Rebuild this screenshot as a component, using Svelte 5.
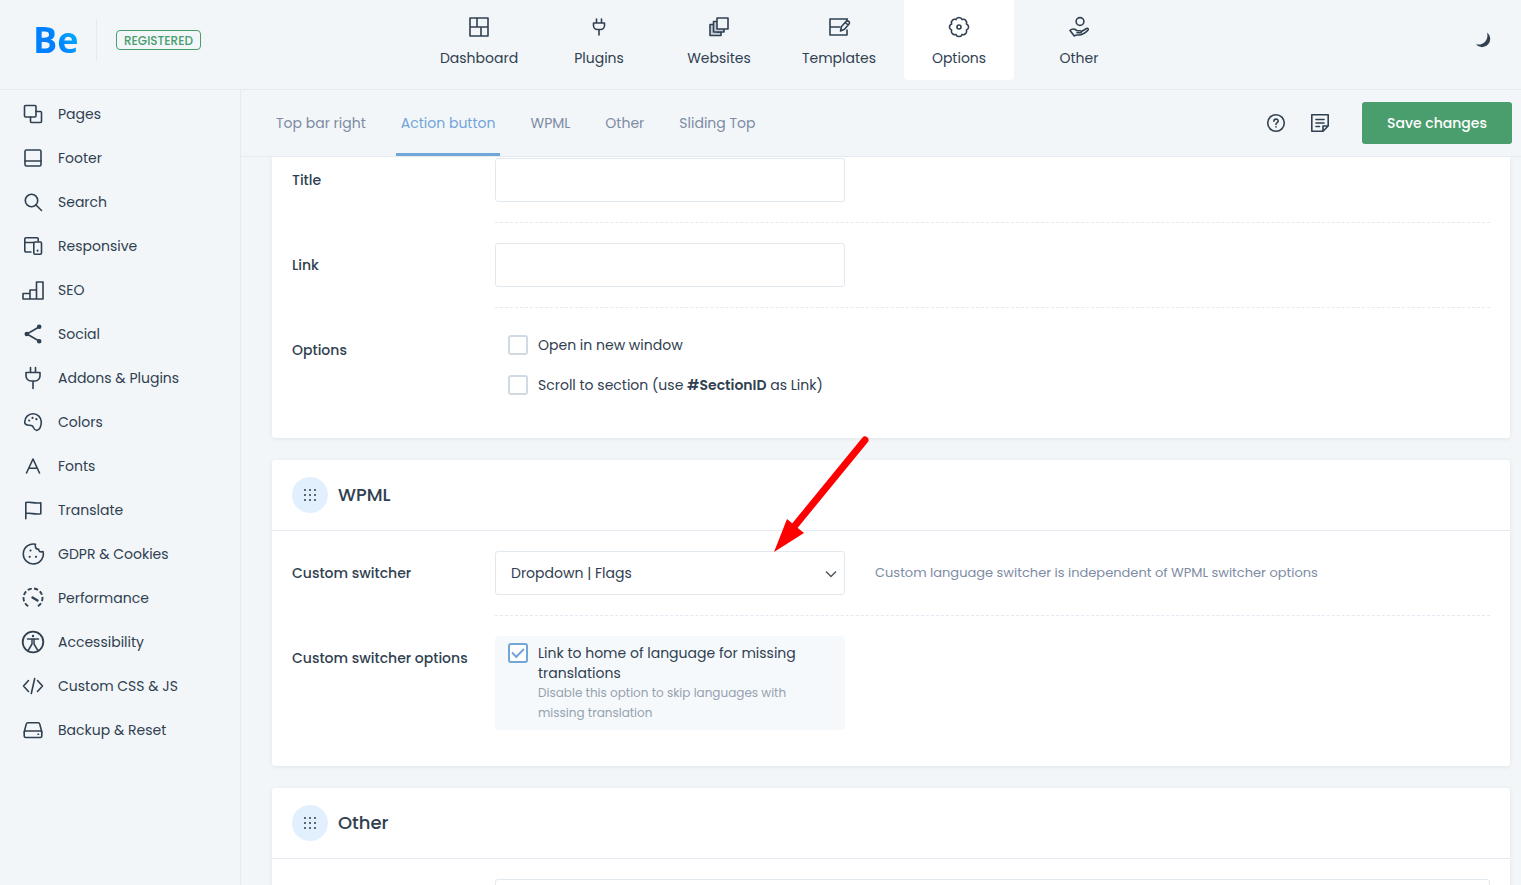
<script>
  const nav = [
    { id: 'dashboard', label: 'Dashboard' },
    { id: 'plug-small', label: 'Plugins' },
    { id: 'websites', label: 'Websites' },
    { id: 'templates', label: 'Templates' },
    { id: 'options', label: 'Options', active: true },
    { id: 'hand', label: 'Other' }
  ];

  const sections = [
    { id: 'pages', label: 'Pages' },
    { id: 'footer', label: 'Footer' },
    { id: 'search', label: 'Search' },
    { id: 'responsive', label: 'Responsive' },
    { id: 'seo', label: 'SEO' },
    { id: 'social', label: 'Social' },
    { id: 'plug', label: 'Addons & Plugins' },
    { id: 'colors', label: 'Colors' },
    { id: 'fonts', label: 'Fonts' },
    { id: 'flag', label: 'Translate' },
    { id: 'cookie', label: 'GDPR & Cookies' },
    { id: 'gauge', label: 'Performance' },
    { id: 'access', label: 'Accessibility' },
    { id: 'code', label: 'Custom CSS & JS' },
    { id: 'drive', label: 'Backup & Reset' }
  ];

  const tabs = ['Top bar right', 'Action button', 'WPML', 'Other', 'Sliding Top'];
  let activeTab = $state('Action button');

  // Stroked artwork on a 24 by 24 grid.
  const icons = {
    dashboard: '<path d="M3 3h18v18H3zM3 12h18M10 3v9M14 12v9"/>',
    'plug-small': '<path d="M9.5 4v4M14.5 4v4M6.500 8h11v2.500a4 4 0 0 1-4 4h-3a4 4 0 0 1-4-4zM12 14.500V20"/>',
    websites: '<path fill="#c5ced8" d="M10 9.500H3v11h11v-3.500h-4z"/><path fill="#c5ced8" d="M9.500 6.500H6.500v10.500h10.500v-3"/><path fill="#f2f6f9" d="M10 3h11v11H10z"/>',
    templates: '<path d="M20 15v5H3V4h17M3 12h10"/><path d="M20 4v2"/><path d="M13.500 16l1-4.500 4.500-5a1.900 1.900 0 0 1 2.700-.2 1.900 1.900 0 0 1 .3 2.700l-4.500 5.200zM18.300 7.500l2.800 2.500"/>',
    options: '<path d="M8.900 4.600A3.300 3.300 0 0 1 15.100 4.600 3.300 3.300 0 0 1 19.400 8.900 3.300 3.300 0 0 1 19.400 15.100 3.300 3.300 0 0 1 15.100 19.400 3.300 3.300 0 0 1 8.900 19.400 3.300 3.300 0 0 1 4.600 15.100 3.300 3.300 0 0 1 4.600 8.900 3.300 3.300 0 0 1 8.900 4.600z"/><circle cx="12" cy="12" r="2"/>',
    hand: '<circle cx="13" cy="6.500" r="3.900"/><path d="M3 15.500c2-2 5-1.700 7 .2h3.200c1.600 0 1.600 2 0 2H10M14.500 16.500l5-3c1.500-.8 2.400.9 1.300 1.900-3 3-5.300 4.600-8.800 4.600-2 0-3.300-.5-4.700 1L3 15.500"/>',
    pages: '<rect x="3.500" y="3.500" width="11.500" height="11.500" rx="1"/><path d="M15 9.500h4.500a1 1 0 0 1 1 1v9a1 1 0 0 1-1 1h-9a1 1 0 0 1-1-1V15"/>',
    footer: '<rect x="4" y="4" width="16" height="16" rx="1.500"/><path d="M4 15h16"/>',
    search: '<circle cx="10.500" cy="10.500" r="6.200"/><path d="M15 15l5.500 5.500"/>',
    responsive: '<path d="M10 18H5a1.200 1.200 0 0 1-1.200-1.200V5A1.200 1.200 0 0 1 5 3.800h11A1.200 1.200 0 0 1 17.200 5v2M4 8.500h9"/><rect x="12.800" y="8" width="7.700" height="12.200" rx="1.200"/><path stroke-width="2" d="M16.600 16.400v.3"/>',
    seo: '<path d="M2 15.500h7V21H2zM9 12h6.500v9H9zM15.500 4H22v17h-6.500z"/>',
    social: '<path d="M18 5L6 12l12 7"/><g fill="#304050"><circle cx="18.200" cy="4.800" r="1.500"/><circle cx="5.800" cy="12" r="1.500"/><circle cx="18.200" cy="19.200" r="1.500"/></g>',
    plug: '<path d="M9.500 1.500v5M14.500 1.500v5M5 6.500h14V10a5 5 0 0 1-5 5h-4a5 5 0 0 1-5-5zM12 15v7.500"/>',
    colors: '<path d="M12 3.700a8.300 8.300 0 0 1 8.300 8.300c0 4.700-1.900 8.400-4.500 8.400-3.200 0-2.900-3.400-4.600-4.600-2.200-1.300-7.500.7-7.500-3.900A8.300 8.300 0 0 1 12 3.700z"/><path stroke-width="2.200" d="M8.200 10.500v.01M11.500 7.900v.01M15.400 9.200v.01"/>',
    fonts: '<path d="M5.500 19L12 5l6.500 14M8 14.200h8"/>',
    flag: '<path d="M4.800 20.800V4.500c5-1.200 9 1.600 15 .2v11c-6 1.400-10-1.400-15-.2"/>',
    cookie: '<path d="M14.500 2.200A10 10 0 1 0 22 9.500c-3 1-4.500-.2-4.300-2.300-3 .2-4-2.400-3.200-5z"/><path stroke-width="2.200" d="M9.500 8.500v.01M8.700 14.800v.01M15 14.800v.01"/>',
    gauge: '<path stroke-width="1.900" stroke-linecap="butt" stroke-dasharray="4.200 2.200" d="M7.200 20.200A9.500 9.500 0 1 1 16.800 20.200"/><path stroke-width="2.400" d="M11.500 11.500L16.500 14.500"/>',
    access: '<circle cx="12" cy="12" r="10.300" stroke-width="1.800"/><circle cx="12" cy="6" r="1.200" fill="#304050" stroke="none"/><path stroke-width="1.500" d="M6.500 9h11M11 9v5L7.500 20M13 9v5l3.500 6"/>',
    code: '<path d="M7.500 6.500L2.500 12l5 5.500M16.500 6.500l5 5.500-5 5.500M13.700 4.500l-3.400 15"/>',
    drive: '<path d="M3.200 14L5.300 5.900A1.500 1.500 0 0 1 6.800 4.700h10.400a1.500 1.500 0 0 1 1.500 1.200L20.800 14"/><rect x="3.200" y="13" width="17.600" height="6.500" rx="1.500"/><path d="M17 16.300h.6"/>',
    help: '<circle cx="12" cy="12" r="8.300"/><path d="M9.900 10.300c0-2.900 4.300-2.700 4.300-.3 0 1.600-2.200 1.600-2.200 3.400M12 15.700v.3"/>',
    note: '<path d="M20.200 15V3.800H3.800v16.400H15zM15 20.200V15h5.200M8 8.500h8M8 12h8M8 15.500h3.500"/>'
  };
</script>

{#snippet icon(name)}
  <svg class="icon" viewBox="0 0 24 24" aria-hidden="true">{@html icons[name]}</svg>
{/snippet}

{#snippet cardHead(title)}
  <header class="card-head">
    <span class="grip">
      <svg viewBox="0 0 12 12" aria-hidden="true">
        {#each [0, 5, 10] as y}
          {#each [0, 5, 10] as x}
            <rect {x} {y} width="2" height="2" />
          {/each}
        {/each}
      </svg>
    </span>
    <h2>{title}</h2>
  </header>
{/snippet}

<div class="app">
  <header class="top">
    <div class="brand">
      <a class="logo" href="#home">Be</a>
      <span class="status">REGISTERED</span>
    </div>
    <nav class="main-nav">
      {#each nav as item}
        <a href="#{item.id}" class:active={item.active}>
          {@render icon(item.id)}
          {item.label}
        </a>
      {/each}
    </nav>
    <div class="tools">
      <button class="bare" aria-label="Dark mode">
        <svg class="moon" viewBox="0 0 16 16" aria-hidden="true">
          <path d="M12 .5A8 8 0 0 1 13.200 12.200 8 8 0 0 1 .8 12.200C4 13.200 8 12.300 10.300 9.500 12.600 6.800 12.800 3.500 12 .5z" />
        </svg>
      </button>
    </div>
  </header>

  <div class="body">
    <nav class="side">
      {#each sections as item}
        <a href="#{item.id}">{@render icon(item.id)}{item.label}</a>
      {/each}
    </nav>

    <main>
      <div class="bar">
        <div class="tabs">
          {#each tabs as tab}
            <button class="tab" class:active={activeTab === tab} onclick={() => (activeTab = tab)}>{tab}</button>
          {/each}
        </div>
        <div class="actions">
          <button class="bare" aria-label="Help">{@render icon('help')}</button>
          <button class="bare" aria-label="Notes">{@render icon('note')}</button>
          <button class="save">Save changes</button>
        </div>
      </div>

      <div class="content">
        <section class="card first">
          <div class="row">
            <label class="name" for="title">Title</label>
            <div class="field"><input class="text" id="title" type="text" /></div>
          </div>
          <div class="row">
            <label class="name" for="link">Link</label>
            <div class="field"><input class="text" id="link" type="text" /></div>
          </div>
          <div class="row">
            <span class="name">Options</span>
            <div class="field checks">
              <label class="check">
                <input type="checkbox" />
                <span>Open in new window</span>
              </label>
              <label class="check">
                <input type="checkbox" />
                <span>Scroll to section (use <b>#SectionID</b> as Link)</span>
              </label>
            </div>
          </div>
        </section>

        <section class="card">
          {@render cardHead('WPML')}
          <div class="row">
            <label class="name" for="switcher">Custom switcher</label>
            <div class="field">
              <div class="select">
                <select id="switcher"><option>Dropdown | Flags</option></select>
                <svg class="chevron" viewBox="0 0 12 8" aria-hidden="true"><path d="M1 1.500l5 5 5-5" /></svg>
                <svg class="pointer" viewBox="0 0 100 120" aria-hidden="true">
                  <path class="shaft" d="M91 8L19 96" />
                  <path class="tip" d="M0 120L13 87l6 5 6 5 5 4z" />
                </svg>
              </div>
              <p class="desc">Custom language switcher is independent of WPML switcher options</p>
            </div>
          </div>
          <div class="row">
            <span class="name">Custom switcher options</span>
            <div class="field checks">
              <label class="check on">
                <input type="checkbox" checked />
                <span>Link to home of language for missing translations
                  <small>Disable this option to skip languages with missing translation</small>
                </span>
              </label>
            </div>
          </div>
        </section>

        <section class="card">
          {@render cardHead('Other')}
          <div class="row">
            <span></span>
            <div class="field"><textarea aria-label="Other" rows="4"></textarea></div>
          </div>
        </section>
      </div>
    </main>
  </div>
</div>

<style>
  :global(body) {
    margin: 0;
    background: #f2f6f9;
  }
  .app {
    --ink: #304050;
    --line: #e4e9f2;
    display: flex;
    flex-direction: column;
    height: 100vh;
    overflow: hidden;
    color: var(--ink);
    font: 14px/20px Poppins, Inter, sans-serif;
  }
  .app * {
    box-sizing: border-box;
  }
  a {
    color: inherit;
    text-decoration: none;
  }
  button,
  input,
  select,
  textarea {
    font: inherit;
    color: inherit;
  }
  .icon {
    flex: none;
    width: 24px;
    height: 24px;
    fill: none;
    stroke: var(--ink);
    stroke-width: 1.6;
    stroke-linejoin: round;
    stroke-linecap: round;
  }
  .bare {
    display: flex;
    padding: 0;
    border: 0;
    background: none;
  }

  .top {
    flex: none;
    display: flex;
    height: 90px;
    border-bottom: 1px solid var(--line);
  }
  .brand {
    flex: none;
    display: flex;
    align-items: center;
    width: 240px;
    height: 80px;
    padding-left: 33px;
  }
  .logo {
    width: 64px;
    border-right: 1px solid var(--line);
    margin-right: 19px;
    font: 700 36px/42px "Open Sans", sans-serif;
    background: linear-gradient(60deg, #0080ff 45%, #00c0ff) 0 0 / 48px 42px no-repeat;
    background-clip: text;
    -webkit-background-clip: text;
    color: transparent;
  }
  .status {
    padding: 1px 7px 0;
    border: 1px solid #4a9d6d;
    border-radius: 4px;
    color: #4a9d6d;
    font-size: 12px;
    font-weight: 500;
    line-height: 17px;
  }
  .main-nav {
    flex: 1;
    display: flex;
    justify-content: center;
    gap: 10px;
  }
  .main-nav a {
    display: flex;
    flex-direction: column;
    align-items: center;
    gap: 9px;
    width: 110px;
    height: 80px;
    padding-top: 15px;
    border-radius: 0 0 4px 4px;
  }
  .main-nav a.active {
    background: #fff;
  }
  .tools {
    flex: none;
    display: flex;
    align-items: center;
    justify-content: flex-end;
    width: 203px;
    height: 80px;
    padding-right: 30px;
  }
  .moon {
    width: 16px;
    height: 16px;
    fill: var(--ink);
  }

  .body {
    flex: 1;
    display: flex;
    min-height: 0;
  }
  .side {
    flex: none;
    width: 241px;
    padding-top: 2px;
    border-right: 1px solid var(--line);
  }
  .side a {
    display: flex;
    align-items: center;
    gap: 13px;
    height: 44px;
    padding-left: 21px;
  }
  main {
    flex: 1;
    display: flex;
    flex-direction: column;
    min-width: 0;
  }
  .bar {
    flex: none;
    display: flex;
    justify-content: space-between;
    height: 67px;
    padding: 0 9px 0 30px;
    border-bottom: 1px solid var(--line);
  }
  .tabs {
    display: flex;
    gap: 25px;
  }
  .tab {
    padding: 3px 5px 0;
    border: 0;
    border-bottom: 3px solid transparent;
    background: none;
    color: #7d8ba3;
  }
  .tab.active {
    border-color: #72a5d8;
    color: #72a5d8;
  }
  .actions {
    display: flex;
    align-items: center;
    gap: 20px;
  }
  .save {
    width: 150px;
    height: 42px;
    margin-left: 10px;
    border: 0;
    border-radius: 3px;
    background: #4a9d6d;
    color: #fff;
    font-weight: 500;
  }

  .content {
    flex: 1;
    display: flex;
    flex-direction: column;
    gap: 22px;
    min-height: 0;
    padding: 0 11px 0 31px;
    overflow: hidden;
  }
  .card {
    flex: none;
    padding-bottom: 10px;
    border-radius: 3px;
    background: #fff;
    box-shadow: 0 1px 4px rgba(48, 64, 80, 0.09);
  }
  .card-head {
    display: flex;
    align-items: center;
    gap: 10px;
    height: 71px;
    padding: 0 20px;
    border-bottom: 1px solid var(--line);
  }
  .grip {
    display: grid;
    place-items: center;
    width: 36px;
    height: 36px;
    border-radius: 50%;
    background: #e2f0fe;
  }
  .grip svg {
    width: 12px;
    height: 12px;
    fill: #5b6977;
  }
  h2 {
    margin: 0;
    font-size: 18px;
    font-weight: 500;
    line-height: 24px;
  }
  .row {
    display: grid;
    grid-template-columns: 203px 1fr;
    padding: 0 20px;
  }
  .name {
    padding-top: 32px;
    font-weight: 500;
  }
  .field {
    display: flex;
    align-items: center;
    gap: 30px;
    padding: 20px 0;
    border-bottom: 1px dashed var(--line);
  }
  .row:last-child .field {
    border-bottom: 0;
  }
  .first {
    border-radius: 0 0 3px 3px;
  }
  .first .row:first-child .field {
    padding-top: 1px;
  }
  .first .row:first-child .name {
    padding-top: 13px;
  }
  .text,
  .select {
    width: 350px;
    height: 44px;
  }
  .text,
  select,
  textarea {
    border: 1px solid #e1e8ee;
    border-radius: 3px;
    background: #fff;
    padding: 0 15px;
  }
  textarea {
    width: 100%;
    resize: none;
  }
  .select {
    position: relative;
  }
  select {
    width: 100%;
    height: 100%;
    appearance: none;
  }
  .chevron {
    position: absolute;
    right: 8px;
    top: 19px;
    width: 12px;
    height: 8px;
    fill: none;
    stroke: #505860;
    stroke-width: 1.5;
    pointer-events: none;
  }
  .pointer {
    position: absolute;
    left: 279px;
    top: -119px;
    z-index: 2;
    width: 100px;
    height: 120px;
    pointer-events: none;
  }
  .shaft {
    stroke: #f00;
    stroke-width: 7;
    stroke-linecap: round;
  }
  .tip {
    fill: #f00;
  }
  .desc {
    margin: 0;
    color: #7d8ba3;
    font-size: 13px;
  }
  .checks {
    flex-direction: column;
    align-items: flex-start;
    gap: 6px;
    padding-bottom: 26px;
  }
  .check {
    display: flex;
    align-items: flex-start;
    gap: 10px;
    width: 350px;
    padding: 7px 13px;
    border-radius: 4px;
  }
  .check.on {
    background: #f5f9fc;
  }
  .check input {
    flex: none;
    display: grid;
    place-items: center;
    width: 20px;
    height: 20px;
    margin: 0;
    appearance: none;
    border: 2px solid #d1dae2;
    border-radius: 3px;
    background: #fff;
  }
  .check input:checked {
    border-color: #72a5d8;
  }
  .check input:checked::after {
    content: '';
    width: 10px;
    height: 5px;
    margin-bottom: 3px;
    border: solid #72a5d8;
    border-width: 0 0 2px 2px;
    transform: rotate(-45deg);
  }
  b {
    font-weight: 600;
  }
  small {
    display: block;
    color: #95a1ae;
    font-size: 12px;
  }
</style>
